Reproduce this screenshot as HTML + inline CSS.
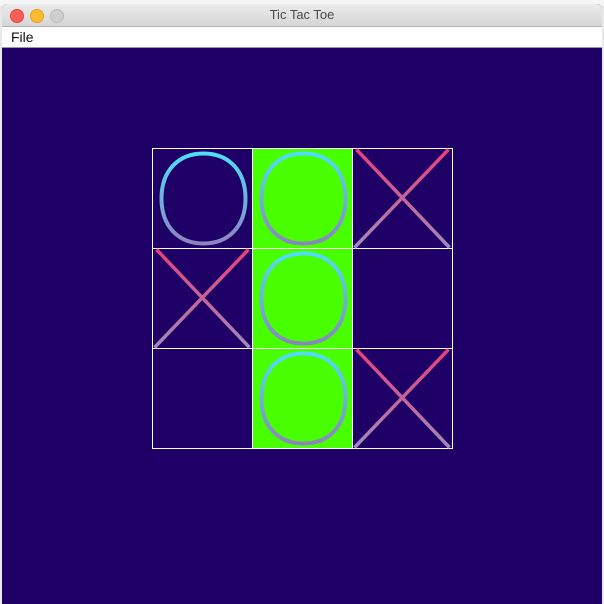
<!DOCTYPE html>
<html><head><style>
html,body{margin:0;padding:0;width:604px;height:604px;overflow:hidden;background:#e8e8e8;font-family:"Liberation Sans",sans-serif}
.top{position:absolute;left:0;top:0;width:604px;height:6px;background:#f4f6f8}
.win{position:absolute;left:2px;top:4px;width:600px;height:600px;background:#1e0066;border-radius:5px 5px 0 0;overflow:hidden}
.title{position:absolute;left:0;top:0;width:600px;height:22px;background:linear-gradient(#ececec,#d6d6d6);border-bottom:1px solid #b0b0b0;text-align:center;font-size:13px;line-height:22px;color:#4a4a4a}
.dot{position:absolute;top:5px;width:12px;height:12px;border-radius:50%}
.menu{position:absolute;left:0;top:23px;width:600px;height:20px;background:#fff;border-bottom:1px solid #999;font-size:14px;line-height:20px;color:#111}
svg{position:absolute;left:0;top:0}
</style></head><body>
<div class="top"></div>
<div class="win">
<div class="title">Tic Tac Toe
<div class="dot" style="left:8px;background:#fc5f57;border:0.5px solid #e0443e"></div>
<div class="dot" style="left:28px;background:#fdbc2e;border:0.5px solid #dea123"></div>
<div class="dot" style="left:48px;background:#cfcfcf;border:0.5px solid #b8b8b8"></div>
</div>
<div class="menu"><span style="margin-left:9px">File</span></div>
</div>
<svg width="604" height="604" viewBox="0 0 604 604">
<defs>
<linearGradient id="go" x1="0" y1="0" x2="0" y2="1"><stop offset="0" stop-color="#50def8"/><stop offset="1" stop-color="#8c84c0"/></linearGradient>
<linearGradient id="gx" x1="0" y1="0" x2="0" y2="1"><stop offset="0" stop-color="#ea3f7a"/><stop offset="1" stop-color="#a08ab8"/></linearGradient>
<g id="X"><line x1="-46" y1="-49" x2="47" y2="49" stroke="url(#gx)" stroke-width="3.5"/><line x1="46" y1="-49" x2="-48" y2="49" stroke="url(#gx)" stroke-width="3.5"/></g>
</defs>
<rect x="252" y="148" width="100" height="300" fill="#48ff00"/>
<g stroke="#fff" stroke-width="1" fill="none">
<rect x="152.5" y="148.5" width="300" height="300"/>
<line x1="252.5" y1="148" x2="252.5" y2="449"/>
<line x1="352.5" y1="148" x2="352.5" y2="449"/>
<line x1="152" y1="248.5" x2="453" y2="248.5"/>
<line x1="152" y1="348.5" x2="453" y2="348.5"/>
</g>
<g transform="translate(203.5,198.5)"><path d="M0,-45 C25,-45 42,-28 42,0 C42,28 25,45 0,45 C-25,45 -42,28 -42,0 C-42,-28 -25,-45 0,-45Z" fill="none" stroke="url(#go)" stroke-width="4"/></g>
<g transform="translate(303.5,198.5)"><path d="M0,-45 C25,-45 42,-28 42,0 C42,28 25,45 0,45 C-25,45 -42,28 -42,0 C-42,-28 -25,-45 0,-45Z" fill="none" stroke="url(#go)" stroke-width="4"/></g>
<g transform="translate(303.5,298.5)"><path d="M0,-45 C25,-45 42,-28 42,0 C42,28 25,45 0,45 C-25,45 -42,28 -42,0 C-42,-28 -25,-45 0,-45Z" fill="none" stroke="url(#go)" stroke-width="4"/></g>
<g transform="translate(303.5,398.5)"><path d="M0,-45 C25,-45 42,-28 42,0 C42,28 25,45 0,45 C-25,45 -42,28 -42,0 C-42,-28 -25,-45 0,-45Z" fill="none" stroke="url(#go)" stroke-width="4"/></g>
<g transform="translate(402.5,198.5)"><use href="#X"/></g>
<g transform="translate(202.5,298.5)"><use href="#X"/></g>
<g transform="translate(402.5,398.5)"><use href="#X"/></g>
</svg>
</body></html>
